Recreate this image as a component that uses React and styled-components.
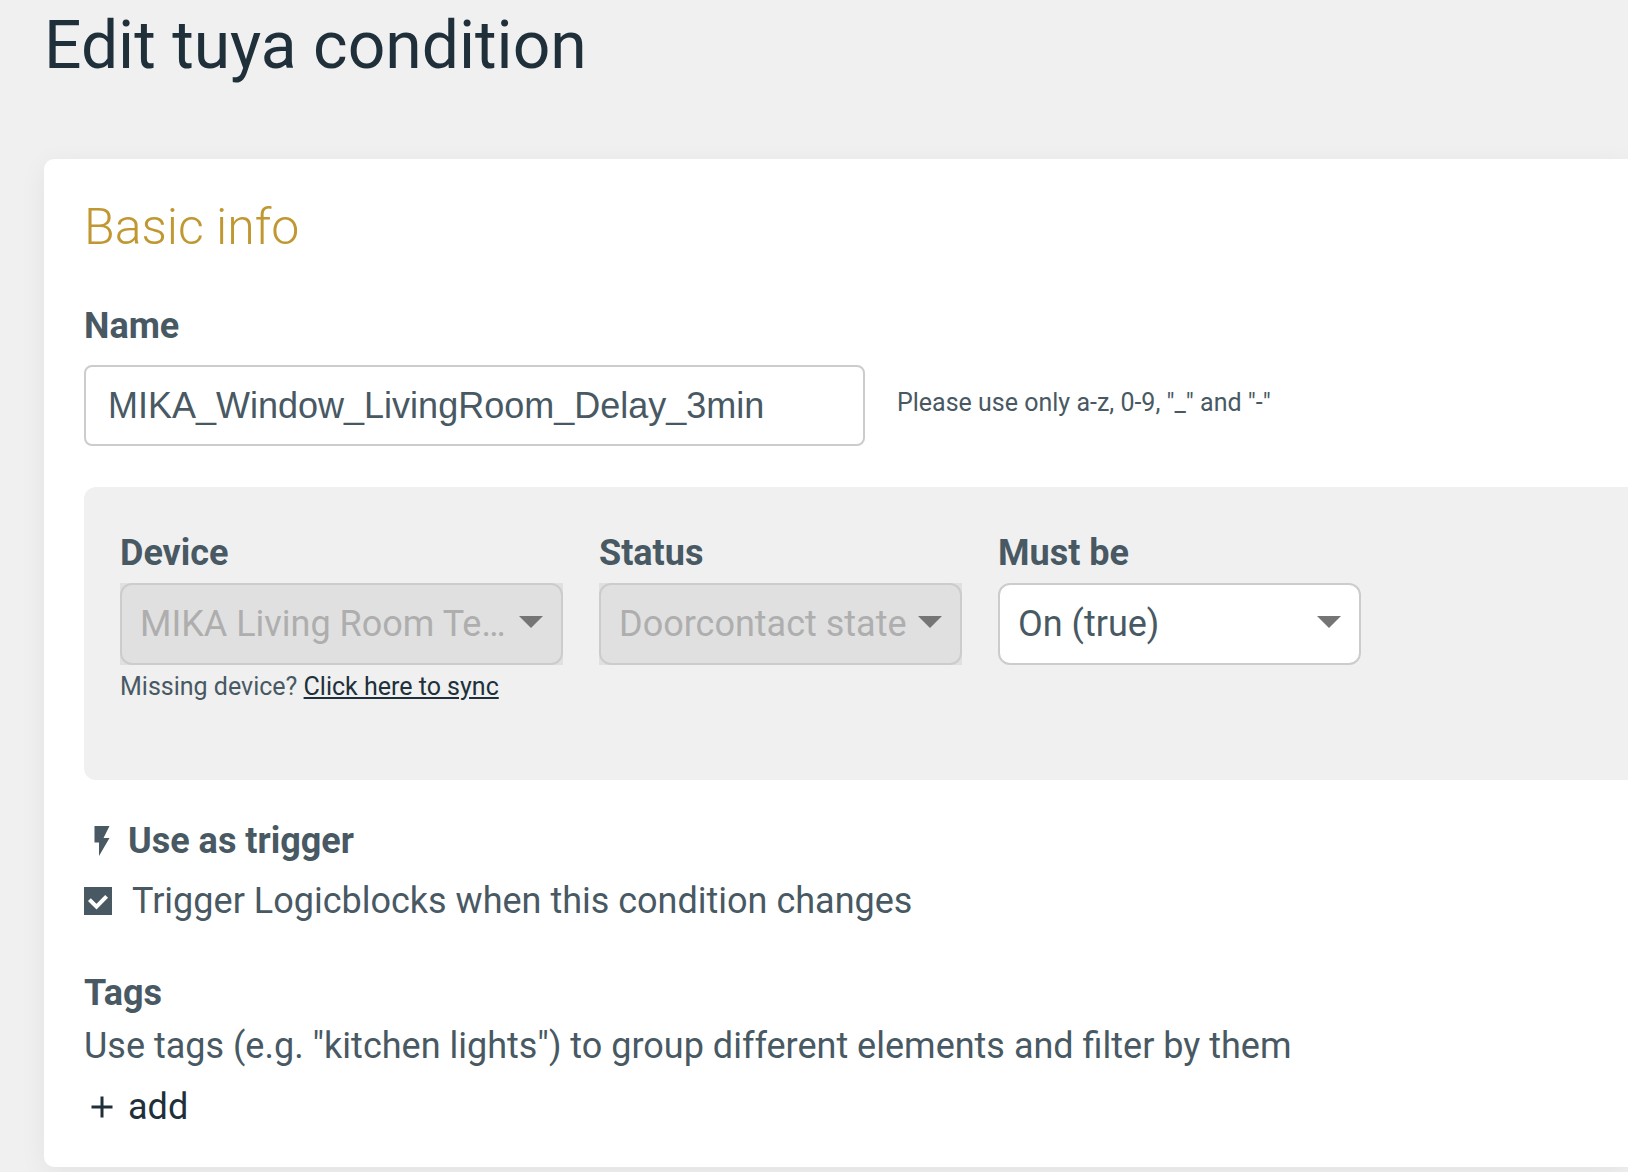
import React, { useState } from 'react'
import styled, { createGlobalStyle } from 'styled-components'

function SelectField({ id, label, options, wide, disabled, children }) {
    return (
        <Field $wide={wide}>
            <Label htmlFor={id}>{label}</Label>
            <SelectBox $disabled={disabled}>
                <Select id={id} disabled={disabled}>
                    {options.map(option => <option key={option}>{option}</option>)}
                </Select>
                <Arrow viewBox="0 0 24 12" aria-hidden="true">
                    <path d="M0 0h24L12 12z"/>
                </Arrow>
            </SelectBox>
            {children}
        </Field>
    )
}

function App() {
    const [name, setName] = useState('MIKA_Window_LivingRoom_Delay_3min')
    const [trigger, setTrigger] = useState(true)

    return (
        <Page>
            <GlobalStyle/>
            <Title>Edit tuya condition</Title>
            <Card>
                <SectionTitle>Basic info</SectionTitle>

                <Label htmlFor="name">Name</Label>
                <NameRow>
                    <NameInput
                        id="name"
                        type="text"
                        spellCheck={false}
                        value={name}
                        onChange={e => setName(e.target.value)}
                    />
                    <Hint>Please use only a-z, 0-9, "_" and "-"</Hint>
                </NameRow>

                <Panel>
                    <SelectField id="device" label="Device" options={['MIKA Living Room Te…']} wide disabled>
                        <Missing>
                            Missing device? <SyncLink href="#sync">Click here to sync</SyncLink>
                        </Missing>
                    </SelectField>
                    <SelectField id="status" label="Status" options={['Doorcontact state']} disabled/>
                    <SelectField id="mustBe" label="Must be" options={['On (true)']}/>
                </Panel>

                <Heading>
                    <Icon viewBox="0 0 24 24" aria-hidden="true">
                        <path d="M7 2v11h3v9l7-12h-4l4-8z"/>
                    </Icon>
                    Use as trigger
                </Heading>
                <CheckRow>
                    <CheckBox>
                        <Check
                            type="checkbox"
                            checked={trigger}
                            onChange={e => setTrigger(e.target.checked)}
                        />
                        {trigger && (
                            <Tick viewBox="0 0 28 28" aria-hidden="true">
                                <path d="M5.4 12.6l7.1 7L22.6 9.4"/>
                            </Tick>
                        )}
                    </CheckBox>
                    Trigger Logicblocks when this condition changes
                </CheckRow>

                <Tags>
                    <Heading>Tags</Heading>
                    <Text>Use tags (e.g. "kitchen lights") to group different elements and filter by them</Text>
                    <AddButton type="button">
                        <Icon viewBox="0 0 24 24" aria-hidden="true">
                            <path d="M19 13h-6v6h-2v-6H5v-2h6V5h2v6h6v2z"/>
                        </Icon>
                        add
                    </AddButton>
                </Tags>
            </Card>
        </Page>
    )
}

export default App

const GlobalStyle = createGlobalStyle`
  * {
    box-sizing: border-box;
  }

  body {
    margin: 0;
    background: #f0f0f0;
    color: #485963;
    font-family: Roboto, sans-serif;
    font-size: 36px;
    line-height: 42px;
  }
`;

const Page = styled.main`
  padding: 6px 0 5px 44px;
  overflow: hidden;
`;

const Title = styled.h1`
  margin: 0 0 73px;
  color: #20303a;
  font-size: 66px;
  font-weight: 400;
  line-height: 80px;
`;

const Card = styled.section`
  padding: 38px 0 39px 40px;
  border-radius: 10px 0 0 10px;
  background: #fff;
  box-shadow: 0 6px 28px rgba(0, 0, 0, 0.06);
`;

const SectionTitle = styled.h2`
  margin: 0 0 48px;
  color: #c09731;
  font-size: 50px;
  font-weight: 300;
  line-height: 60px;
`;

const Label = styled.label`
  display: block;
  font-weight: 700;
`;

const NameRow = styled.div`
  display: flex;
  align-items: center;
  gap: 32px;
  margin: 18px 0 41px;
`;

const NameInput = styled.input`
  width: 781px;
  height: 81px;
  padding: 0 22px;
  border: 2px solid #ccc;
  border-radius: 8px;
  background: #fff;
  color: inherit;
  font-family: "Liberation Sans", sans-serif;
  font-size: 36px;
`;

const Hint = styled.small`
  padding-bottom: 6px;
  font-size: 25px;
  line-height: 30px;
`;

const Panel = styled.div`
  display: flex;
  align-items: flex-start;
  gap: 36px;
  margin-bottom: 40px;
  padding: 45px 36px 78px;
  border-radius: 12px 0 0 12px;
  background: #f0f0f0;
`;

const Field = styled.div`
  width: ${props => props.$wide ? 443 : 363}px;
`;

const SelectBox = styled.div`
  position: relative;
  margin-top: 9px;
  background: ${props => props.$disabled ? '#e0e0e0' : 'none'};
`;

const Select = styled.select`
  display: block;
  width: 100%;
  height: 82px;
  padding: 0 50px 0 18px;
  appearance: none;
  border: 2px solid #ccc;
  border-radius: 12px;
  background: #fff;
  color: inherit;
  font: inherit;

  &:disabled {
    background: #e0e0e0;
    color: #aeaeae;
    opacity: 1;
  }
`;

const Arrow = styled.svg`
  position: absolute;
  top: 33px;
  right: 20px;
  width: 24px;
  height: 12px;
  fill: #757575;
  pointer-events: none;
`;

const Missing = styled.p`
  margin: 7px 0 0;
  font-size: 25px;
  line-height: 30px;
`;

const SyncLink = styled.a`
  color: #20303a;
`;

const Heading = styled.h3`
  display: flex;
  align-items: center;
  gap: 8px;
  margin: 0;
  font-size: 36px;
  font-weight: 700;
`;

const Icon = styled.svg`
  width: 36px;
  height: 36px;
  fill: currentColor;
`;

const CheckRow = styled.label`
  display: flex;
  align-items: center;
  gap: 20px;
  margin-top: 18px;
`;

const CheckBox = styled.span`
  position: relative;
  width: 28px;
  height: 28px;
`;

const Check = styled.input`
  display: block;
  width: 28px;
  height: 28px;
  margin: 0;
  appearance: none;
  border: 2px solid #485963;

  &:checked {
    background: #485963;
  }
`;

const Tick = styled.svg`
  position: absolute;
  inset: 0;
  fill: none;
  stroke: #fff;
  stroke-width: 4;
  pointer-events: none;
`;

const Tags = styled.div`
  margin-top: 50px;
`;

const Text = styled.p`
  margin: 11px 0 19px;
`;

const AddButton = styled.button`
  display: flex;
  align-items: center;
  gap: 8px;
  padding: 0;
  border: none;
  background: none;
  color: #20303a;
  font: inherit;
`;
